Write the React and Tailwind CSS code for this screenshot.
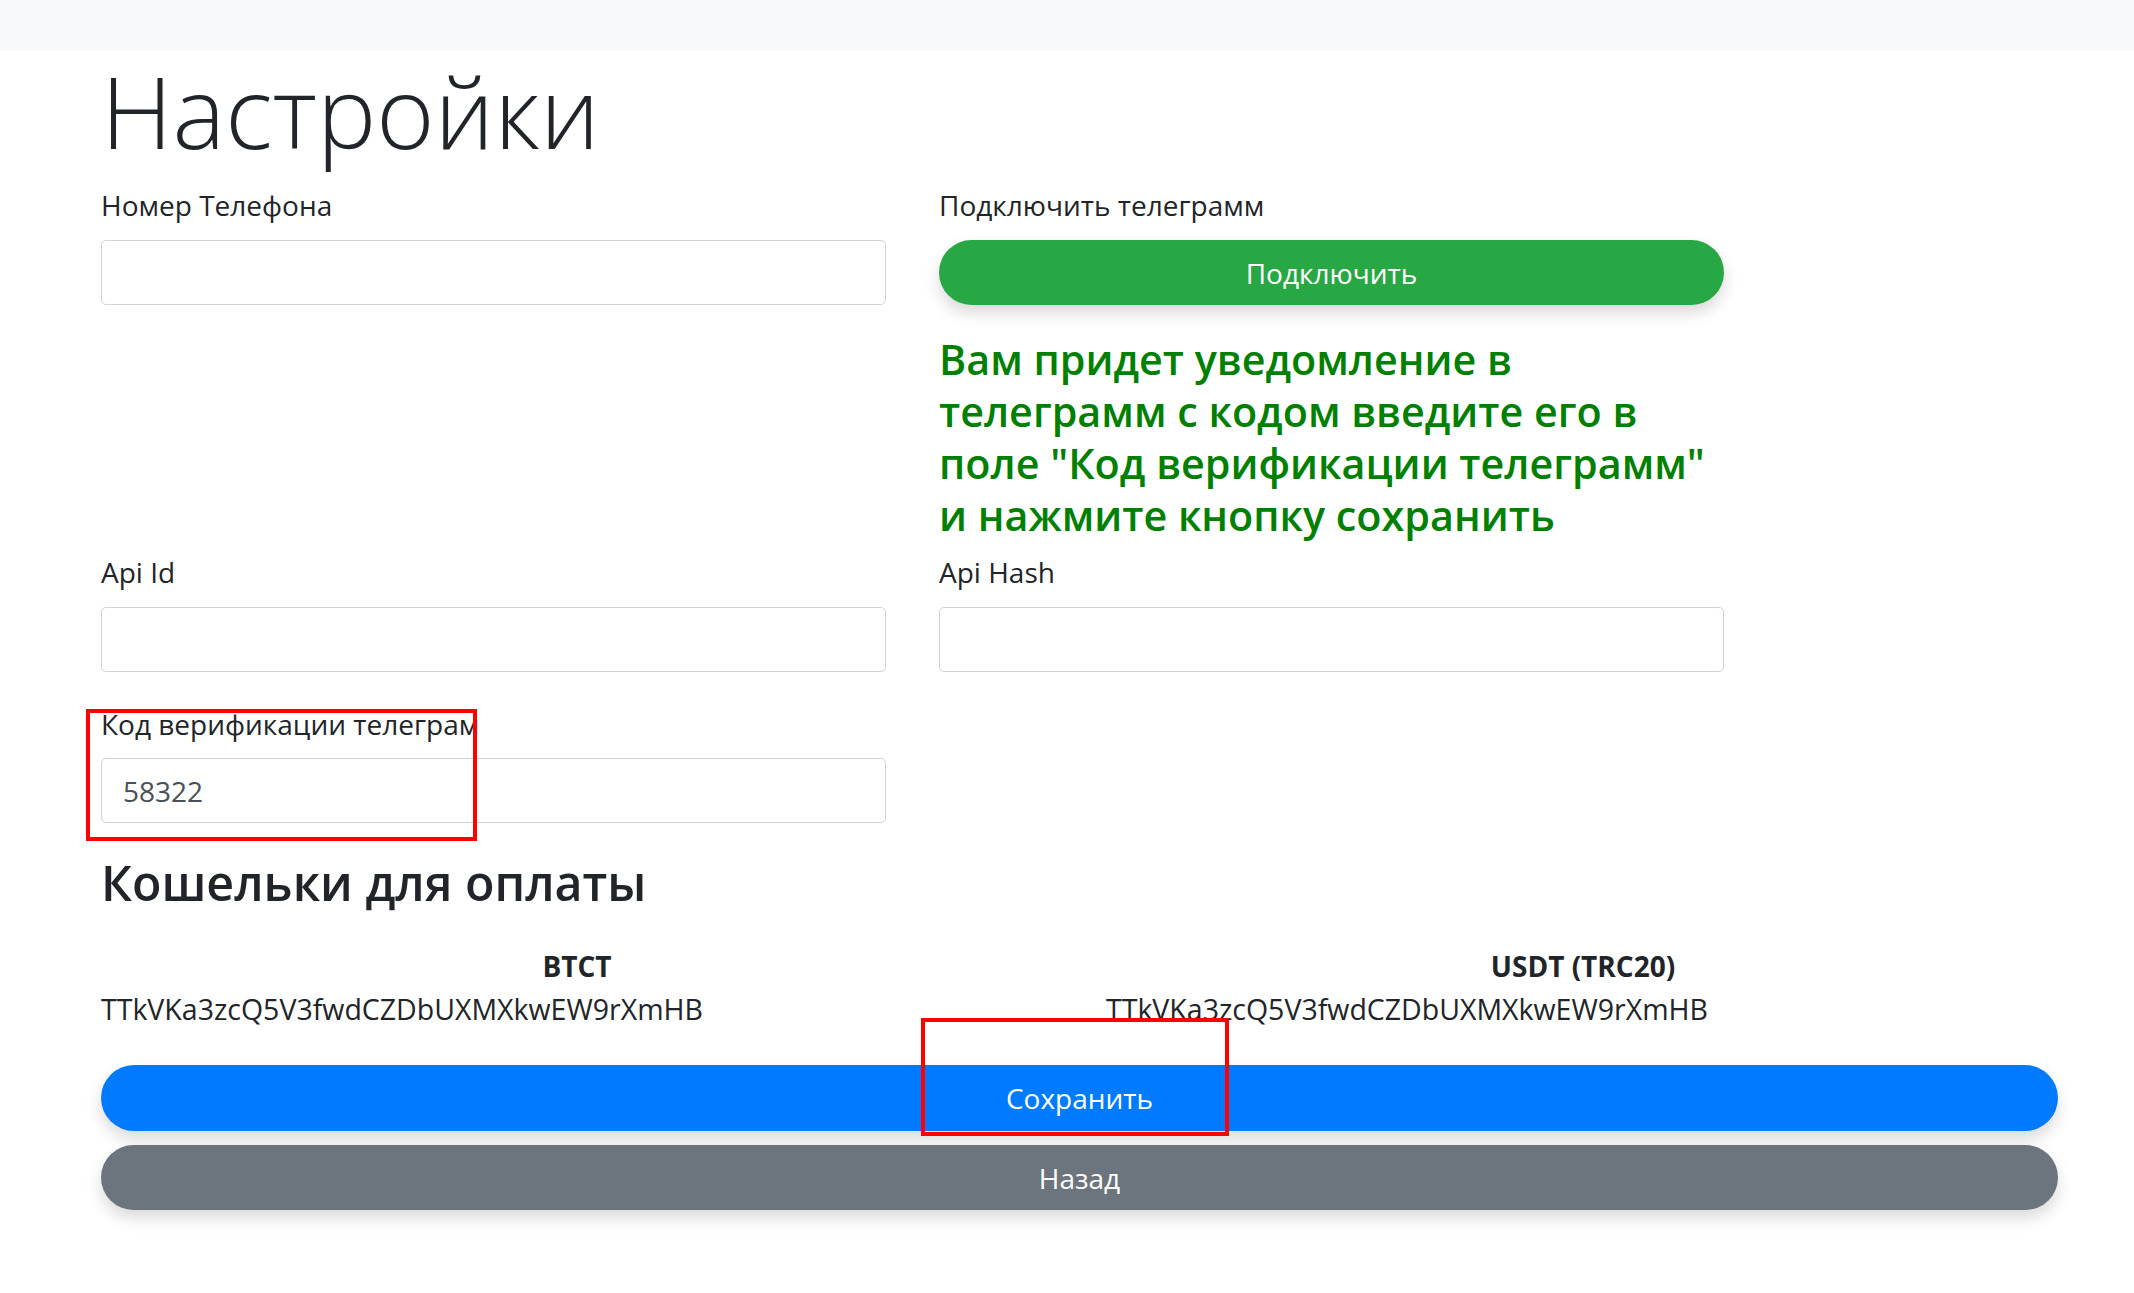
import React from 'react';

const font = { fontFamily: '"Open Sans", "Noto Sans", sans-serif' };

function Field({ label, value, className = '' }) {
  return (
    <div className={className}>
      <label className="block text-[28px] leading-[40px] text-[#212529]">{label}</label>
      <div className="mt-[15px] h-[65px] border border-[#ced4da] rounded-[5px] bg-white flex items-center pl-[21px] text-[28px] text-[#495057]">
        {value}
      </div>
    </div>
  );
}

export default function App() {
  return (
    <div className="relative min-h-[1293px] bg-white text-[#212529]" style={font}>
      <div className="h-[51px] bg-[#f8f9fa]"></div>

      <div className="pl-[101px] pr-[76px]">
        <h1 className="mt-[8px] text-[99.5px] leading-[104px] font-light">Настройки</h1>

        <div className="mt-[22px] grid grid-cols-[785px_785px] gap-x-[53px]">
          <Field label="Номер Телефона" value="" />
          <div>
            <label className="block text-[28px] leading-[40px]">Подключить телеграмм</label>
            <button className="mt-[15px] w-full h-[65px] rounded-full bg-[#28a745] text-white text-[28px] shadow-[0_8px_16px_rgba(0,0,0,0.15)]">
              Подключить
            </button>
            <p className="mt-[28px] text-[41.3px] leading-[52px] font-semibold text-[#008000]">
              Вам придет уведомление в телеграмм с кодом введите его в поле "Код верификации телеграмм" и нажмите кнопку сохранить
            </p>
          </div>
        </div>

        <div className="mt-[11px] grid grid-cols-[785px_785px] gap-x-[53px]">
          <Field label="Api Id" value="" />
          <Field label="Api Hash" value="" />
        </div>

        <div className="mt-[32px] grid grid-cols-[785px_785px] gap-x-[53px]">
          <div>
            <label className="block text-[28px] leading-[40px] whitespace-nowrap">Код верификации телеграм</label>
            <div className="mt-[14px] h-[65px] border border-[#ced4da] rounded-[5px] flex items-center pl-[21px] text-[28px] text-[#495057]">
              58322
            </div>
          </div>
        </div>

        <h2 className="mt-[32px] text-[48.3px] leading-[54px] font-semibold">Кошельки для оплаты</h2>

        <div className="mt-[37px] grid grid-cols-[952px_954px] gap-x-[53px] text-[28.5px] leading-[40px]">
          <div className="text-center font-bold text-[28px]">BTCT</div>
          <div className="text-center font-bold text-[28px]">USDT (TRC20)</div>
          <div className="mt-[3px]">TTkVKa3zcQ5V3fwdCZDbUXMXkwEW9rXmHB</div>
          <div className="mt-[3px]">TTkVKa3zcQ5V3fwdCZDbUXMXkwEW9rXmHB</div>
        </div>

        <button className="mt-[36px] w-full h-[66px] rounded-full bg-[#007bff] text-white text-[28px] shadow-[0_8px_16px_rgba(0,0,0,0.15)]">
          Сохранить
        </button>
        <button className="mt-[14px] w-full h-[65px] rounded-full bg-[#6c757d] text-white text-[28px] shadow-[0_8px_16px_rgba(0,0,0,0.15)]">
          Назад
        </button>
      </div>

      <div className="absolute left-[86px] top-[709px] w-[391px] h-[132px] border-[4px] border-[#ff0000] pointer-events-none"></div>
      <div className="absolute left-[921px] top-[1018px] w-[308px] h-[118px] border-[4px] border-[#ff0000] pointer-events-none"></div>
    </div>
  );
}
